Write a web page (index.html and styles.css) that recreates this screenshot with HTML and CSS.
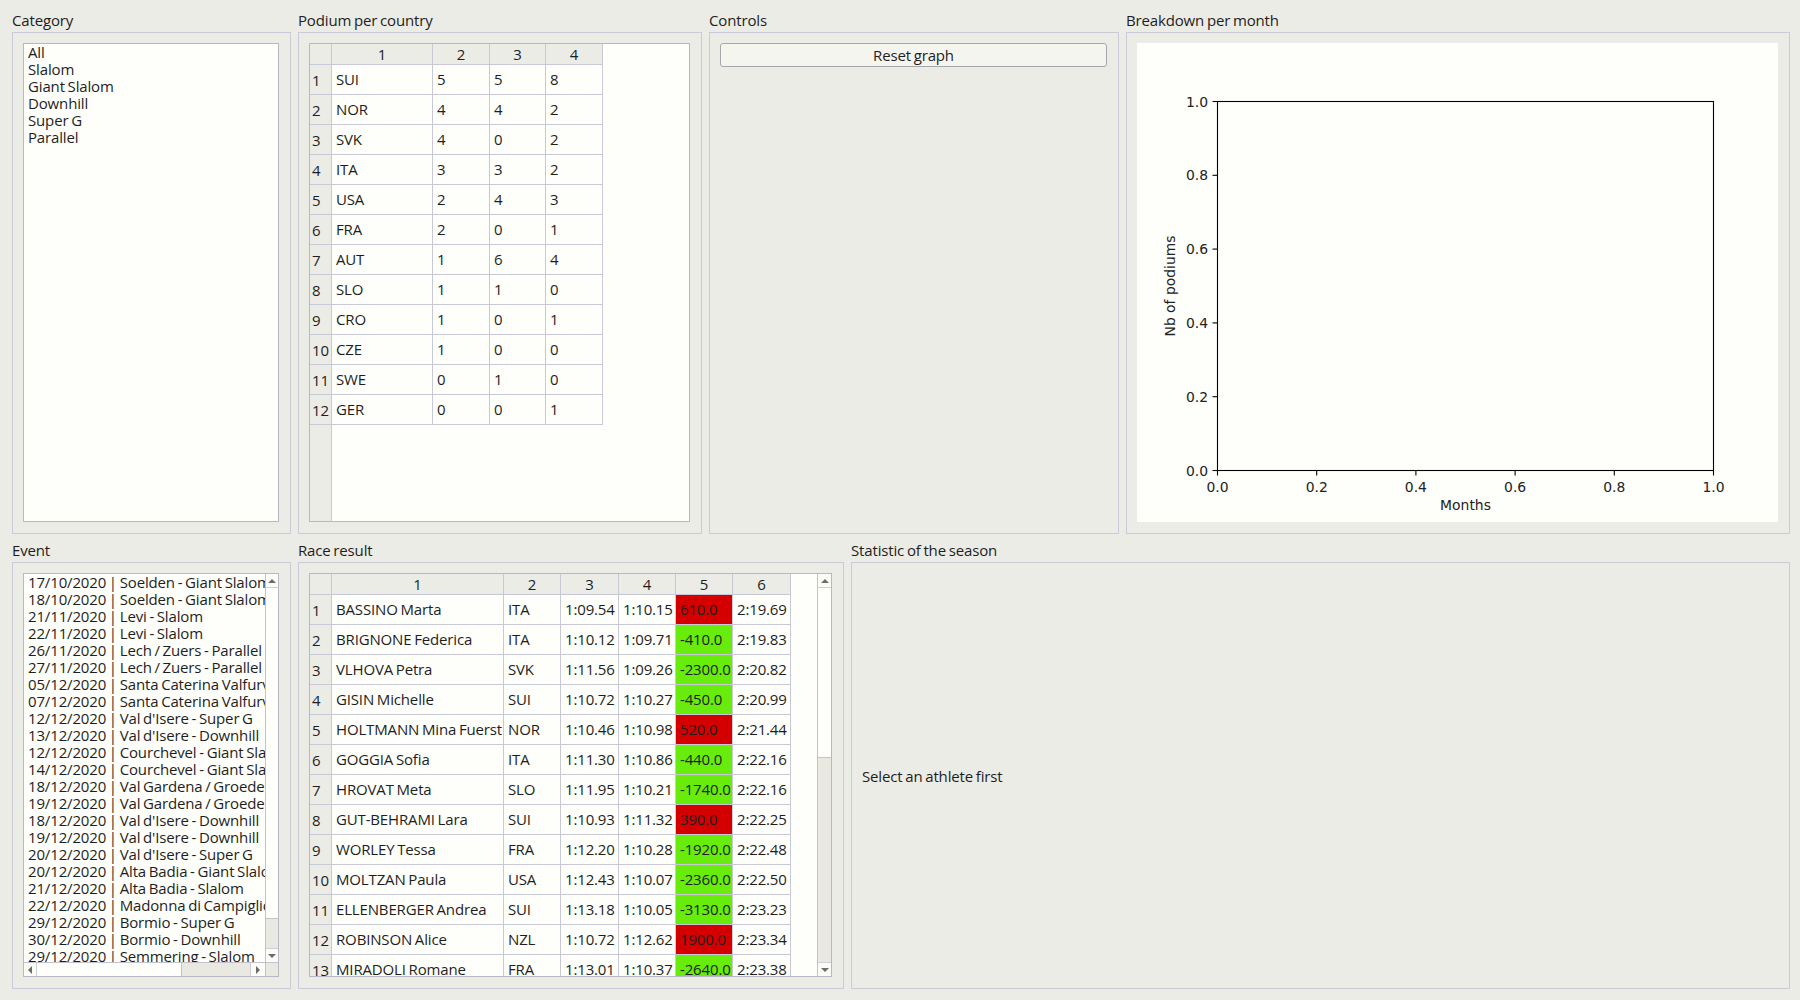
FILE: index.html
```html
<!DOCTYPE html>
<html>
<head>
<meta charset="utf-8">
<title>Ski results</title>
<link rel="stylesheet" href="styles.css">
</head>
<body>
<div class="app">
  <div class="row row-top">
    <section class="group w-cat">
      <div class="glabel">Category</div>
      <div class="gframe">
        <div class="listbox plain">
          <div class="item">All</div>
          <div class="item">Slalom</div>
          <div class="item">Giant Slalom</div>
          <div class="item">Downhill</div>
          <div class="item">Super G</div>
          <div class="item">Parallel</div>
        </div>
      </div>
    </section>

    <section class="group w-podium">
      <div class="glabel">Podium per country</div>
      <div class="gframe">
        <div class="tw">
          <div class="tgrid podium-grid">
            <div class="c hc"></div><div class="c hc">1</div><div class="c hc">2</div><div class="c hc">3</div><div class="c hc">4</div>
            <div class="c vh">1</div><div class="c">SUI</div><div class="c">5</div><div class="c">5</div><div class="c">8</div>
            <div class="c vh">2</div><div class="c">NOR</div><div class="c">4</div><div class="c">4</div><div class="c">2</div>
            <div class="c vh">3</div><div class="c">SVK</div><div class="c">4</div><div class="c">0</div><div class="c">2</div>
            <div class="c vh">4</div><div class="c">ITA</div><div class="c">3</div><div class="c">3</div><div class="c">2</div>
            <div class="c vh">5</div><div class="c">USA</div><div class="c">2</div><div class="c">4</div><div class="c">3</div>
            <div class="c vh">6</div><div class="c">FRA</div><div class="c">2</div><div class="c">0</div><div class="c">1</div>
            <div class="c vh">7</div><div class="c">AUT</div><div class="c">1</div><div class="c">6</div><div class="c">4</div>
            <div class="c vh">8</div><div class="c">SLO</div><div class="c">1</div><div class="c">1</div><div class="c">0</div>
            <div class="c vh">9</div><div class="c">CRO</div><div class="c">1</div><div class="c">0</div><div class="c">1</div>
            <div class="c vh">10</div><div class="c">CZE</div><div class="c">1</div><div class="c">0</div><div class="c">0</div>
            <div class="c vh">11</div><div class="c">SWE</div><div class="c">0</div><div class="c">1</div><div class="c">0</div>
            <div class="c vh">12</div><div class="c">GER</div><div class="c">0</div><div class="c">0</div><div class="c">1</div>
          </div>
        </div>
      </div>
    </section>

    <section class="group w-controls">
      <div class="glabel">Controls</div>
      <div class="gframe">
        <button class="btn" type="button">Reset graph</button>
      </div>
    </section>

    <section class="group w-chart">
      <div class="glabel">Breakdown per month</div>
      <div class="gframe">
        <div class="canvas">
          <svg class="chart" width="641" height="479" viewBox="0 0 641 479">
            <g stroke="#000" stroke-width="1.1" fill="none">
              <rect x="80.5" y="58.5" width="496" height="369"/>
              <line x1="75.5" y1="427.5" x2="80.5" y2="427.5"/>
              <line x1="75.5" y1="353.7" x2="80.5" y2="353.7"/>
              <line x1="75.5" y1="279.9" x2="80.5" y2="279.9"/>
              <line x1="75.5" y1="206.1" x2="80.5" y2="206.1"/>
              <line x1="75.5" y1="132.3" x2="80.5" y2="132.3"/>
              <line x1="75.5" y1="58.5" x2="80.5" y2="58.5"/>
              <line x1="80.5" y1="427.5" x2="80.5" y2="432.5"/>
              <line x1="179.7" y1="427.5" x2="179.7" y2="432.5"/>
              <line x1="278.9" y1="427.5" x2="278.9" y2="432.5"/>
              <line x1="378.1" y1="427.5" x2="378.1" y2="432.5"/>
              <line x1="477.3" y1="427.5" x2="477.3" y2="432.5"/>
              <line x1="576.5" y1="427.5" x2="576.5" y2="432.5"/>
            </g>
            <g class="ticklbl" text-anchor="end">
              <text x="71" y="432.5">0.0</text>
              <text x="71" y="358.7">0.2</text>
              <text x="71" y="284.9">0.4</text>
              <text x="71" y="211.1">0.6</text>
              <text x="71" y="137.3">0.8</text>
              <text x="71" y="63.5">1.0</text>
            </g>
            <g class="ticklbl" text-anchor="middle">
              <text x="80.5" y="449">0.0</text>
              <text x="179.7" y="449">0.2</text>
              <text x="278.9" y="449">0.4</text>
              <text x="378.1" y="449">0.6</text>
              <text x="477.3" y="449">0.8</text>
              <text x="576.5" y="449">1.0</text>
            </g>
            <text class="ticklbl" x="328.5" y="467" text-anchor="middle">Months</text>
            <text class="ticklbl" transform="translate(38 243) rotate(-90)" text-anchor="middle">Nb of podiums</text>
          </svg>
        </div>
      </div>
    </section>
  </div>

  <div class="row row-bottom">
    <section class="group w-event">
      <div class="glabel">Event</div>
      <div class="gframe">
        <div class="listbox scrolled">
          <div class="lb-view">
            <div class="item">17/10/2020 | Soelden - Giant Slalom</div>
            <div class="item">18/10/2020 | Soelden - Giant Slalom</div>
            <div class="item">21/11/2020 | Levi - Slalom</div>
            <div class="item">22/11/2020 | Levi - Slalom</div>
            <div class="item">26/11/2020 | Lech / Zuers - Parallel</div>
            <div class="item">27/11/2020 | Lech / Zuers - Parallel</div>
            <div class="item">05/12/2020 | Santa Caterina Valfurva - Giant Slalom</div>
            <div class="item">07/12/2020 | Santa Caterina Valfurva - Slalom</div>
            <div class="item">12/12/2020 | Val d'Isere - Super G</div>
            <div class="item">13/12/2020 | Val d'Isere - Downhill</div>
            <div class="item">12/12/2020 | Courchevel - Giant Slalom</div>
            <div class="item">14/12/2020 | Courchevel - Giant Slalom</div>
            <div class="item">18/12/2020 | Val Gardena / Groeden - Super G</div>
            <div class="item">19/12/2020 | Val Gardena / Groeden - Downhill</div>
            <div class="item">18/12/2020 | Val d'Isere - Downhill</div>
            <div class="item">19/12/2020 | Val d'Isere - Downhill</div>
            <div class="item">20/12/2020 | Val d'Isere - Super G</div>
            <div class="item">20/12/2020 | Alta Badia - Giant Slalom</div>
            <div class="item">21/12/2020 | Alta Badia - Slalom</div>
            <div class="item">22/12/2020 | Madonna di Campiglio - Slalom</div>
            <div class="item">29/12/2020 | Bormio - Super G</div>
            <div class="item">30/12/2020 | Bormio - Downhill</div>
            <div class="item">29/12/2020 | Semmering - Slalom</div>
            <div class="item">30/12/2020 | Semmering - Giant Slalom</div>
          </div>
          <div class="vscroll ev-v">
            <div class="sb-arrow"><span class="tri up"></span></div>
            <div class="sb-thumb"></div>
            <div class="sb-track"></div>
            <div class="sb-arrow bottom"><span class="tri down"></span></div>
          </div>
          <div class="hscroll">
            <div class="sb-arrow h"><span class="tri left"></span></div>
            <div class="sb-thumb h"></div>
            <div class="sb-track"></div>
            <div class="sb-arrow h right"><span class="tri right"></span></div>
          </div>
          <div class="sb-corner"></div>
        </div>
      </div>
    </section>

    <section class="group w-race">
      <div class="glabel">Race result</div>
      <div class="gframe">
        <div class="tw race-w">
          <div class="tview">
            <div class="tgrid race-grid">
              <div class="c hc"></div><div class="c hc">1</div><div class="c hc">2</div><div class="c hc">3</div><div class="c hc">4</div><div class="c hc">5</div><div class="c hc">6</div>
              <div class="c vh">1</div><div class="c">BASSINO Marta</div><div class="c">ITA</div><div class="c">1:09.54</div><div class="c">1:10.15</div><div class="c red">610.0</div><div class="c">2:19.69</div>
              <div class="c vh">2</div><div class="c">BRIGNONE Federica</div><div class="c">ITA</div><div class="c">1:10.12</div><div class="c">1:09.71</div><div class="c green">-410.0</div><div class="c">2:19.83</div>
              <div class="c vh">3</div><div class="c">VLHOVA Petra</div><div class="c">SVK</div><div class="c">1:11.56</div><div class="c">1:09.26</div><div class="c green">-2300.0</div><div class="c">2:20.82</div>
              <div class="c vh">4</div><div class="c">GISIN Michelle</div><div class="c">SUI</div><div class="c">1:10.72</div><div class="c">1:10.27</div><div class="c green">-450.0</div><div class="c">2:20.99</div>
              <div class="c vh">5</div><div class="c">HOLTMANN Mina Fuerst</div><div class="c">NOR</div><div class="c">1:10.46</div><div class="c">1:10.98</div><div class="c red">520.0</div><div class="c">2:21.44</div>
              <div class="c vh">6</div><div class="c">GOGGIA Sofia</div><div class="c">ITA</div><div class="c">1:11.30</div><div class="c">1:10.86</div><div class="c green">-440.0</div><div class="c">2:22.16</div>
              <div class="c vh">7</div><div class="c">HROVAT Meta</div><div class="c">SLO</div><div class="c">1:11.95</div><div class="c">1:10.21</div><div class="c green">-1740.0</div><div class="c">2:22.16</div>
              <div class="c vh">8</div><div class="c">GUT-BEHRAMI Lara</div><div class="c">SUI</div><div class="c">1:10.93</div><div class="c">1:11.32</div><div class="c red">390.0</div><div class="c">2:22.25</div>
              <div class="c vh">9</div><div class="c">WORLEY Tessa</div><div class="c">FRA</div><div class="c">1:12.20</div><div class="c">1:10.28</div><div class="c green">-1920.0</div><div class="c">2:22.48</div>
              <div class="c vh">10</div><div class="c">MOLTZAN Paula</div><div class="c">USA</div><div class="c">1:12.43</div><div class="c">1:10.07</div><div class="c green">-2360.0</div><div class="c">2:22.50</div>
              <div class="c vh">11</div><div class="c">ELLENBERGER Andrea</div><div class="c">SUI</div><div class="c">1:13.18</div><div class="c">1:10.05</div><div class="c green">-3130.0</div><div class="c">2:23.23</div>
              <div class="c vh">12</div><div class="c">ROBINSON Alice</div><div class="c">NZL</div><div class="c">1:10.72</div><div class="c">1:12.62</div><div class="c red">1900.0</div><div class="c">2:23.34</div>
              <div class="c vh">13</div><div class="c">MIRADOLI Romane</div><div class="c">FRA</div><div class="c">1:13.01</div><div class="c">1:10.37</div><div class="c green">-2640.0</div><div class="c">2:23.38</div>
            </div>
          </div>
          <div class="vscroll race-v">
            <div class="sb-arrow"><span class="tri up"></span></div>
            <div class="sb-thumb"></div>
            <div class="sb-track"></div>
            <div class="sb-arrow bottom"><span class="tri down"></span></div>
          </div>
        </div>
      </div>
    </section>

    <section class="group w-stat">
      <div class="glabel">Statistic of the season</div>
      <div class="gframe stat-frame">
        <div class="stat-msg">Select an athlete first</div>
      </div>
    </section>
  </div>
</div>
</body>
</html>
```

FILE: styles.css
```css
* { box-sizing: border-box; }

html, body {
  margin: 0;
  padding: 0;
}

body {
  width: 1800px;
  height: 1000px;
  overflow: hidden;
  background: #ececE6;
  color: #1e1e1e;
  font-family: "Open Sans", "Liberation Sans", sans-serif;
  font-size: 15px;
  letter-spacing: -0.15px;
  word-spacing: -1px;
}

.app {
  padding: 12px 0 0 12px;
}

.row {
  display: flex;
  gap: 7px;
}

.row-bottom {
  margin-top: 8px;
}

.group {
  display: flex;
  flex-direction: column;
  flex: none;
}

.glabel {
  height: 17px;
  line-height: 17px;
  margin-bottom: 3px;
  white-space: nowrap;
}

.gframe {
  border: 1px solid #cacad8;
  padding: 10px 11px 11px 10px;
}

.row-top .gframe { height: 502px; }
.row-bottom .gframe { height: 427px; }

.w-cat { width: 279px; }
.w-podium { width: 404px; }
.w-controls { width: 410px; }
.w-chart { width: 664px; }
.w-event { width: 279px; }
.w-race { width: 546px; }
.w-stat { width: 939px; }

/* list boxes */
.listbox {
  height: 100%;
  border: 1px solid #b7b7c6;
  background: #fefefa;
  overflow: hidden;
}

.listbox.plain {
  padding: 0 4px;
}

.item {
  line-height: 17px;
  height: 17px;
  white-space: nowrap;
}

.listbox.scrolled {
  display: grid;
  grid-template-columns: 1fr 13px;
  grid-template-rows: 1fr 14px;
}

.lb-view {
  overflow: hidden;
  padding: 0 0 0 4px;
}

/* scrollbars */
.vscroll {
  display: flex;
  flex-direction: column;
  border-left: 1px solid #c3c3d0;
  background: #e9e9e1;
}

.hscroll {
  display: flex;
  border-top: 1px solid #c3c3d0;
  background: #e9e9e1;
}

.sb-corner {
  border-left: 1px solid #c3c3d0;
  border-top: 1px solid #c3c3d0;
  background: #e9e9e1;
}

.sb-arrow {
  flex: none;
  height: 14px;
  display: flex;
  align-items: center;
  justify-content: center;
  background: #fcfcf7;
  border-bottom: 1px solid #cfcfda;
}

.sb-arrow.bottom {
  border-bottom: none;
  border-top: 1px solid #cfcfda;
}

.sb-arrow.h {
  width: 13px;
  height: auto;
  border-bottom: none;
  border-right: 1px solid #cfcfda;
}

.sb-arrow.h.right {
  width: 15px;
  border-right: none;
  border-left: 1px solid #cfcfda;
}

.sb-thumb {
  flex: none;
  background: #fefefa;
  border-bottom: 1px solid #c3c3d0;
}

.sb-thumb.h {
  width: 145px;
  border-bottom: none;
  border-right: 1px solid #c3c3d0;
}

.sb-track {
  flex: 1;
}

.ev-v .sb-thumb { height: 331px; }
.race-v .sb-thumb { height: 170px; }

.tri {
  width: 0;
  height: 0;
  border-style: solid;
  border-color: transparent;
}

.tri.up {
  border-width: 0 4px 4px 4px;
  border-bottom-color: #6b6b70;
}

.tri.down {
  border-width: 4px 4px 0 4px;
  border-top-color: #6b6b70;
}

.tri.left {
  border-width: 4px 4px 4px 0;
  border-right-color: #6b6b70;
}

.tri.right {
  border-width: 4px 0 4px 4px;
  border-left-color: #6b6b70;
}

/* table widgets */
.tw {
  height: 100%;
  border: 1px solid #b7b7c6;
  overflow: hidden;
  background: linear-gradient(to right, #ececE6 0 21px, #c8c8d6 21px 22px, #fefefa 22px);
}

.race-w {
  display: grid;
  grid-template-columns: 1fr 14px;
  background: #fefefa;
}

.tview {
  overflow: hidden;
  background: linear-gradient(to right, #ececE6 0 21px, #c8c8d6 21px 22px, #fefefa 22px);
}

.tgrid {
  display: grid;
}

.podium-grid {
  grid-template-columns: 22px 101px 57px 56px 57px;
  grid-template-rows: 21px repeat(12, 30px);
  width: 293px;
}

.race-grid {
  grid-template-columns: 22px 172px 57px 58px 57px 57px 58px;
  grid-template-rows: 21px repeat(13, 30px);
  width: 481px;
}

.c {
  border-right: 1px solid #c8c8d6;
  border-bottom: 1px solid #c8c8d6;
  background: #fefefa;
  padding: 0 0 0 4px;
  line-height: 29px;
  white-space: nowrap;
  overflow: hidden;
}

.c.hc {
  background: #ececE6;
  text-align: center;
  padding: 0;
  line-height: 20px;
}

.c.vh {
  background: #ececE6;
  padding-left: 2px;
  line-height: 31px;
}

.c.red { background: #d40000; }
.c.green { background: #68ec0c; }

/* controls */
.btn {
  display: block;
  width: 100%;
  height: 24px;
  margin: 0;
  padding: 0;
  border: 1px solid #a6a6ab;
  border-radius: 3px;
  background: #f5f5f0;
  color: #1e1e1e;
  font: inherit;
  letter-spacing: -0.15px;
  word-spacing: -1px;
  line-height: 22px;
  text-align: center;
}

/* chart */
.canvas {
  height: 100%;
  background: #fefefa;
}

.chart {
  display: block;
}

.ticklbl {
  font-family: "DejaVu Sans", sans-serif;
  font-size: 13.9px;
  letter-spacing: 0;
  word-spacing: 0;
  fill: #222;
}

/* statistic */
.stat-frame {
  display: flex;
  align-items: center;
  padding-left: 10px;
}

.stat-msg {
  line-height: 17px;
  margin-top: 2px;
}
```
